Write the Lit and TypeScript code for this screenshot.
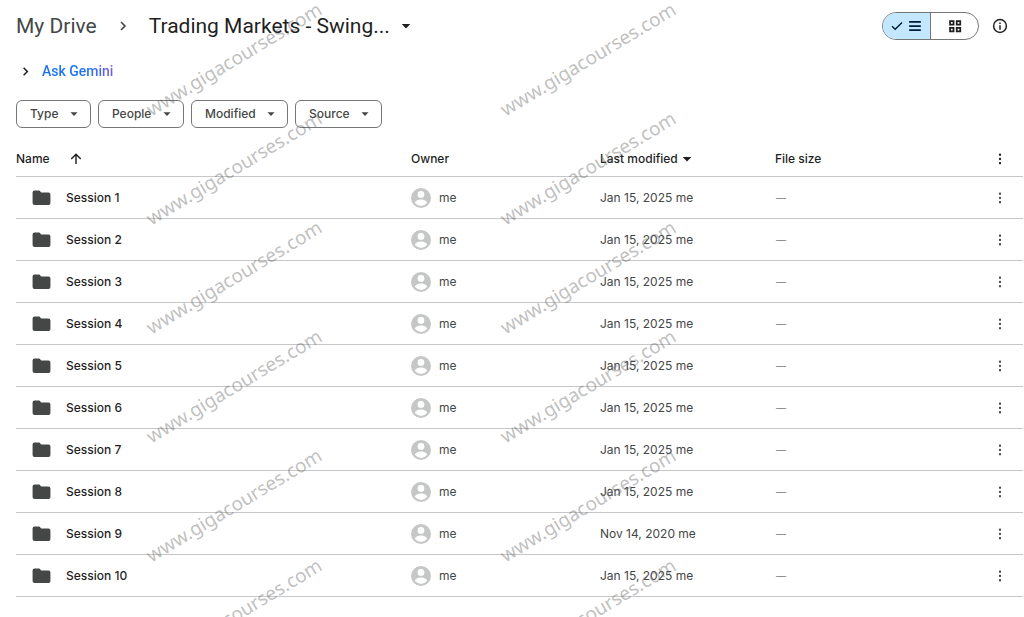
import { LitElement, html, css, svg } from "lit";
import { customElement, property } from "lit/decorators.js";

interface Item {
  name: string;
  modified: string;
}

const ITEMS: Item[] = Array.from({ length: 10 }, (_, i) => ({
  name: `Session ${i + 1}`,
  modified: i === 8 ? "Nov 14, 2020" : "Jan 15, 2025",
}));

const FILTERS = ["Type", "People", "Modified", "Source"];

const MARKS = [59, 168, 277, 386, 505, 615].flatMap((y) => [
  { x: 234, y },
  { x: 588, y },
]);

const GLYPHS = {
  chevron: svg`<path d="M9 6l6 6-6 6" fill="none" stroke="currentColor" stroke-width="2.4"/>`,
  caret: svg`<path d="M3.500 8h17L12 17z"/>`,
  check: svg`<path d="M2 12.500l6.400 6.200L22 5" fill="none" stroke="currentColor" stroke-width="2.8"/>`,
  list: svg`<path d="M2 3.500h20v3H2zM2 10.500h20v3H2zM2 17.500h20v3H2z"/>`,
  grid: svg`<path fill-rule="evenodd" d="M2 2h9v9H2zM5 5v3h3V5zM13.500 2h9v9h-9zM16.500 5v3h3V5zM2 13.500h9v9H2zM5 16.500v3h3v-3zM13.500 13.500h9v9h-9zM16.500 16.500v3h3v-3z"/>`,
  info: svg`<circle cx="12" cy="12" r="9.600" fill="none" stroke="currentColor" stroke-width="2.200"/><path d="M10.900 10.700h2.200v6.800h-2.200zM10.900 6.800h2.200v2.300h-2.200z"/>`,
  arrow: svg`<path d="M12 22V3M2.500 12L12 2.500l9.500 9.500" fill="none" stroke="currentColor" stroke-width="2.800"/>`,
  folder: svg`<path d="M4 4h5.600l2.200 2.400H20a2.200 2.200 0 0 1 2.200 2.200v9.800a2.200 2.200 0 0 1-2.200 2.200H4a2.200 2.200 0 0 1-2.200-2.200V6.200A2.200 2.200 0 0 1 4 4z"/>`,
  person: svg`<path fill-rule="evenodd" d="M12 2a10 10 0 1 0 0 20 10 10 0 0 0 0-20zM12 5a3.400 3.400 0 1 1 0 6.800A3.400 3.400 0 0 1 12 5zM12 13.600c3 0 6 1.500 6 3v.500a7.800 7.800 0 0 1-12 0v-.500c0-1.500 3-3 6-3z"/>`,
  more: svg`<circle cx="12" cy="3.500" r="2.300"/><circle cx="12" cy="12" r="2.300"/><circle cx="12" cy="20.500" r="2.300"/>`,
};

@customElement("drive-icon")
class DriveIcon extends LitElement {
  @property() name: keyof typeof GLYPHS = "more";

  static styles = css`
    :host {
      display: inline-block;
      flex: none;
      width: 12px;
      height: 12px;
    }
    .glyph {
      display: block;
      width: 100%;
      height: 100%;
      fill: currentColor;
    }
  `;

  render() {
    return html`<svg class="glyph" viewBox="0 0 24 24" aria-hidden="true">${GLYPHS[this.name]}</svg>`;
  }
}

@customElement("app-root")
class AppRoot extends LitElement {
  static styles = css`
    :host {
      display: block;
      position: relative;
      overflow: hidden;
      min-height: 100vh;
      box-sizing: border-box;
      padding: 8px 1px 16px 16px;
      background: #fff;
      color: #1f1f1f;
      font: 12px/20px Inter, "Open Sans", sans-serif;
    }
    button,
    select {
      font: inherit;
      color: inherit;
      border: 0;
      background: none;
      padding: 0;
      margin: 0;
    }
    .top {
      display: flex;
      align-items: center;
      justify-content: space-between;
      height: 36px;
      padding-right: 15px;
    }
    .crumbs {
      display: flex;
      align-items: center;
      font: 21px/28px Roboto, sans-serif;
    }
    .parent {
      color: #444746;
      text-decoration: none;
    }
    .crumbs .sep {
      width: 16px;
      height: 16px;
      margin: 0 18px;
      color: #444746;
    }
    .current {
      display: flex;
      align-items: center;
      gap: 10px;
    }
    .tools {
      display: flex;
      align-items: center;
      gap: 13px;
    }
    .views {
      display: flex;
      box-sizing: border-box;
      height: 28px;
      border: 1px solid #747775;
      border-radius: 14px;
      overflow: hidden;
    }
    .view {
      display: flex;
      align-items: center;
      justify-content: center;
      gap: 5px;
      width: 47px;
    }
    .view.on {
      width: 48px;
      background: #c2e7ff;
      color: #001d35;
      border-right: 1px solid #747775;
    }
    .view .wide {
      width: 14px;
      height: 14px;
    }
    .info {
      display: flex;
    }
    .info .ring {
      width: 16px;
      height: 16px;
    }
    .gemini {
      display: flex;
      align-items: center;
      gap: 9px;
      margin: 17px 0 0 2px;
      font: 14px/20px Roboto, sans-serif;
    }
    .gemini .tip {
      width: 15px;
      height: 15px;
    }
    .ask {
      background: linear-gradient(90deg, #1a73e8, #1c72f5 65%, #7a5fe0);
      background-clip: text;
      -webkit-background-clip: text;
      color: transparent;
      font-weight: 500;
    }
    .filters {
      display: flex;
      gap: 7px;
      margin-top: 19px;
    }
    .chip {
      display: grid;
      align-items: center;
      border: 1px solid #747775;
      border-radius: 6px;
      color: #444746;
      font-weight: 500;
    }
    .chip > * {
      grid-area: 1 / 1;
    }
    .chip select {
      appearance: none;
      height: 26px;
      padding: 0 31px 0 13px;
    }
    .chip .down {
      justify-self: end;
      margin-right: 11px;
      width: 10px;
      height: 10px;
      pointer-events: none;
    }
    .files {
      width: 100%;
      margin-top: 14px;
      table-layout: fixed;
      border-collapse: collapse;
    }
    .owner {
      width: 189px;
    }
    .modified {
      width: 175px;
    }
    .size {
      width: 204px;
    }
    .menu {
      width: 44px;
    }
    th,
    td {
      height: 41px;
      padding: 0;
      border-bottom: 1px solid #c7c7c7;
      text-align: left;
      color: #444746;
      font-weight: 400;
    }
    thead th {
      height: 34px;
      color: #1f1f1f;
      font-weight: 500;
    }
    .cell {
      display: flex;
      align-items: center;
    }
    .sort {
      gap: 20px;
    }
    .last {
      gap: 3px;
    }
    .title {
      gap: 14px;
      padding-left: 15px;
      color: #1f1f1f;
      font-weight: 500;
    }
    .title .folder {
      width: 21px;
      height: 21px;
      color: #444746;
    }
    .who {
      gap: 6px;
    }
    .who .face {
      width: 24px;
      height: 24px;
      margin-left: -2px;
      color: #c4c7c5;
    }
    .none {
      padding-left: 1px;
      font-size: 10px;
      color: #747775;
    }
    .dots {
      display: flex;
      margin-left: 15px;
    }
    .marks {
      position: absolute;
      inset: 0;
      pointer-events: none;
    }
    .mark {
      position: absolute;
      transform: translate(-50%, -50%) rotate(-31deg);
      color: rgba(90, 90, 90, 0.4);
      font: 19px/20px "Noto Sans", sans-serif;
      white-space: nowrap;
    }
  `;

  private menuCell(label: string) {
    return html`<button class="dots" aria-label=${label}><drive-icon name="more"></drive-icon></button>`;
  }

  render() {
    return html`
      <header class="top">
        <nav class="crumbs" aria-label="Folder path">
          <a class="parent" href="#">My Drive</a>
          <drive-icon class="sep" name="chevron"></drive-icon>
          <button class="current">Trading Markets - Swing...<drive-icon name="caret"></drive-icon></button>
        </nav>
        <div class="tools">
          <div class="views" role="group" aria-label="Layout">
            <button class="view on" aria-label="List" aria-pressed="true">
              <drive-icon name="check"></drive-icon><drive-icon class="wide" name="list"></drive-icon>
            </button>
            <button class="view" aria-label="Grid" aria-pressed="false">
              <drive-icon class="wide" name="grid"></drive-icon>
            </button>
          </div>
          <button class="info" aria-label="Details"><drive-icon class="ring" name="info"></drive-icon></button>
        </div>
      </header>

      <button class="gemini">
        <drive-icon class="tip" name="chevron"></drive-icon><span class="ask">Ask Gemini</span>
      </button>

      <div class="filters">
        ${FILTERS.map(
          (name) => html`<label class="chip">
            <select aria-label=${name}><option>${name}</option></select>
            <drive-icon class="down" name="caret"></drive-icon>
          </label>`
        )}
      </div>

      <table class="files">
        <thead>
          <tr>
            <th><button class="cell sort">Name<drive-icon name="arrow"></drive-icon></button></th>
            <th class="owner">Owner</th>
            <th class="modified"><button class="cell last">Last modified<drive-icon name="caret"></drive-icon></button></th>
            <th class="size">File size</th>
            <th class="menu">${this.menuCell("List options")}</th>
          </tr>
        </thead>
        <tbody>
          ${ITEMS.map(
            (item) => html`<tr>
              <td><div class="cell title"><drive-icon class="folder" name="folder"></drive-icon>${item.name}</div></td>
              <td><div class="cell who"><drive-icon class="face" name="person"></drive-icon>me</div></td>
              <td>${item.modified} me</td>
              <td class="none">—</td>
              <td>${this.menuCell(`Actions for ${item.name}`)}</td>
            </tr>`
          )}
        </tbody>
      </table>

      <div class="marks" aria-hidden="true">
        ${MARKS.map((m) => html`<span class="mark" style="left:${m.x}px;top:${m.y}px">www.gigacourses.com</span>`)}
      </div>
    `;
  }
}
